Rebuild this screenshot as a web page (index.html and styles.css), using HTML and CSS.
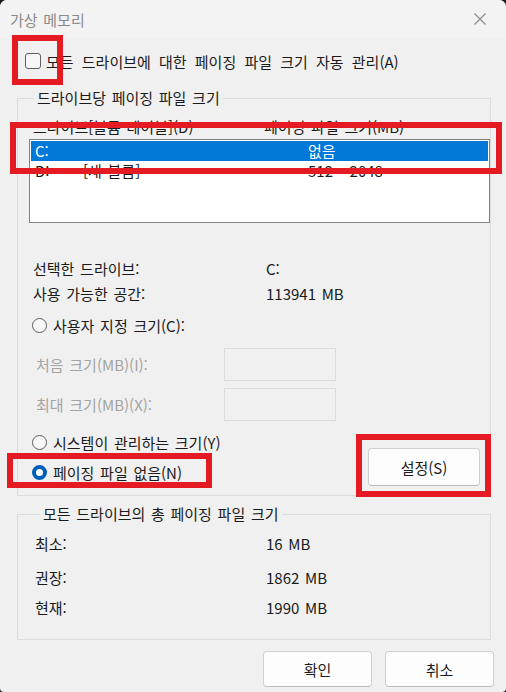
FILE: index.html
```html
<!DOCTYPE html>
<html lang="ko">
<head>
    <meta charset="UTF-8">
    <meta name="viewport" content="width=device-width, initial-scale=1.0">
    <title>가상 메모리</title>
    <link rel="stylesheet" href="styles.css">
</head>
<body>
    <div class="window">
        <div class="titlebar">
            <span class="title">가상 메모리</span>
            <svg class="close" width="12" height="12" viewBox="0 0 12 12"><path d="M0.5 0.5L11.5 11.5M11.5 0.5L0.5 11.5" stroke="#8a8a8a" stroke-width="1.1"/></svg>
        </div>

        <div class="content">
            <label class="auto">
                <span class="checkbox"></span>
                <span class="auto-text">모든 드라이브에 대한 페이징 파일 크기 자동 관리(A)</span>
            </label>

            <fieldset class="group group-drives">
                <legend>드라이브당 페이징 파일 크기</legend>
                <div class="cols head">
                    <span class="col-drive">드라이브[볼륨 레이블](D)</span>
                    <span class="col-size">페이징 파일 크기(MB)</span>
                </div>
                <div class="listbox">
                    <div class="item selected">
                        <span class="drv">C:</span><span class="vol"></span><span class="size">없음</span>
                    </div>
                    <div class="item">
                        <span class="drv">D:</span><span class="vol">[새 볼륨]</span><span class="size">512 - 2048</span>
                    </div>
                </div>

                <div class="info first">
                    <span class="label">선택한 드라이브:</span><span class="value">C:</span>
                </div>
                <div class="info">
                    <span class="label">사용 가능한 공간:</span><span class="value">113941 MB</span>
                </div>

                <label class="radio-row custom"><span class="radio"></span>사용자 지정 크기(C):</label>
                <div class="size-row first-size">
                    <span class="dis-label">처음 크기(MB)(I):</span><span class="field"></span>
                </div>
                <div class="size-row">
                    <span class="dis-label">최대 크기(MB)(X):</span><span class="field"></span>
                </div>

                <div class="bottom">
                    <div class="radios">
                        <label class="radio-row"><span class="radio"></span>시스템이 관리하는 크기(Y)</label>
                        <label class="radio-row second"><span class="radio checked"></span>페이징 파일 없음(N)</label>
                    </div>
                    <button class="btn set">설정(S)</button>
                </div>
            </fieldset>

            <fieldset class="group group-total">
                <legend>모든 드라이브의 총 페이징 파일 크기</legend>
                <div class="total"><span class="label">최소:</span><span class="value">16 MB</span></div>
                <div class="total mid"><span class="label">권장:</span><span class="value">1862 MB</span></div>
                <div class="total last"><span class="label">현재:</span><span class="value">1990 MB</span></div>
            </fieldset>

            <div class="actions">
                <button class="btn">확인</button>
                <button class="btn">취소</button>
            </div>
        </div>

        <!-- red annotation boxes -->
        <div class="mark mark-check"></div>
        <div class="mark mark-list"></div>
        <div class="mark mark-radio"></div>
        <div class="mark mark-button"></div>
    </div>
</body>
</html>
```

FILE: styles.css
```css
* { box-sizing: border-box; }
html, body { margin: 0; padding: 0; background: #1b1b1b; }
body { font-family: "Noto Sans CJK KR", "Noto Sans", sans-serif; font-size: 15px; color: #1a1a1a; word-spacing: 1.5px; }

.window { position: relative; width: 506px; height: 692px; background: #f0f0f0; border-radius: 7px 7px 4px 4px; overflow: hidden; }
.titlebar { height: 38px; display: flex; align-items: center; justify-content: space-between; padding: 0 20px 0 10px; background: #f3f3f3; }
.title { color: #8a8a8a; font-size: 15px; }

.content { padding: 0 15px 0 17px; }

.auto { display: flex; align-items: center; height: 46px; margin-bottom: 4px; padding-left: 8px; gap: 5px; }
.auto-text { word-spacing: 4px; }
.checkbox { width: 16px; height: 16px; border: 1px solid #5e5e5e; border-radius: 3px; background: #f7f7f7; }

.group { margin: 0; padding: 0 0 0 11px; border: 1px solid #dcdcdc; min-width: 0; }
.group legend { margin-left: 5px; padding: 0 3px; line-height: 20px; }

.cols { display: flex; height: 20px; line-height: 20px; margin-top: 9px; }
.head { padding-left: 4px; }
.col-drive { width: 231px; }

.listbox { margin-top: 2px; height: 84px; background: #fff; border: 1px solid #828282; padding: 1px; }
.item { display: flex; height: 20px; line-height: 20px; padding-left: 4px; }
.item.selected { background: #0078d7; color: #fff; }
.drv { width: 48px; }
.vol { width: 225px; }

.info { display: flex; height: 25px; line-height: 25px; padding-left: 4px; }
.info.first { margin-top: 33px; }
.label { width: 233px; }

.radio-row { display: flex; align-items: center; gap: 6px; height: 22px; padding-left: 3px; }
.radio-row.custom { margin-top: 8px; }
.radio-row.second { margin-top: 8px; }
.radio { width: 15px; height: 15px; border: 1px solid #5e5e5e; border-radius: 50%; background: #f7f7f7; }
.radio.checked { border: 4px solid #005fb8; background: #fff; }

.size-row { display: flex; align-items: center; height: 33px; padding-left: 7px; margin-top: 7px; }
.size-row.first-size { margin-top: 12px; }
.dis-label { width: 188px; color: #a3a3a3; }
.field { width: 112px; height: 33px; border: 1px solid #dcdcdc; background: #f0f0f0; }

.bottom { display: flex; justify-content: space-between; align-items: flex-start; margin-top: 10px; padding: 0 10px 9px 0; }
.btn { font-family: inherit; font-size: 15px; color: #1a1a1a; background: #fdfdfd; border: 1px solid #d0d0d0; border-bottom-color: #bdbdbd; border-radius: 4px; height: 38px; width: 112px; }
.btn.set { margin-top: 17px; }

.group-total { margin-top: 8px; padding-left: 17px; padding-bottom: 21px; }
.total { display: flex; height: 20px; line-height: 20px; }
.total:first-of-type { margin-top: 10px; }
.total.mid { margin-top: 14px; }
.total.last { margin-top: 10px; }
.total .label { width: 231px; }

.actions { display: flex; justify-content: flex-end; gap: 13px; margin: 11px -3px 0 0; }
.actions .btn { width: 109px; height: 36px; }

.mark { position: absolute; border: 6px solid #e41b22; }
.mark-check { left: 12px; top: 35px; width: 51px; height: 50px; }
.mark-list { left: 10px; top: 122px; width: 492px; height: 52px; }
.mark-radio { left: 7px; top: 453px; width: 205px; height: 35px; }
.mark-button { left: 356px; top: 434px; width: 135px; height: 63px; }
```
